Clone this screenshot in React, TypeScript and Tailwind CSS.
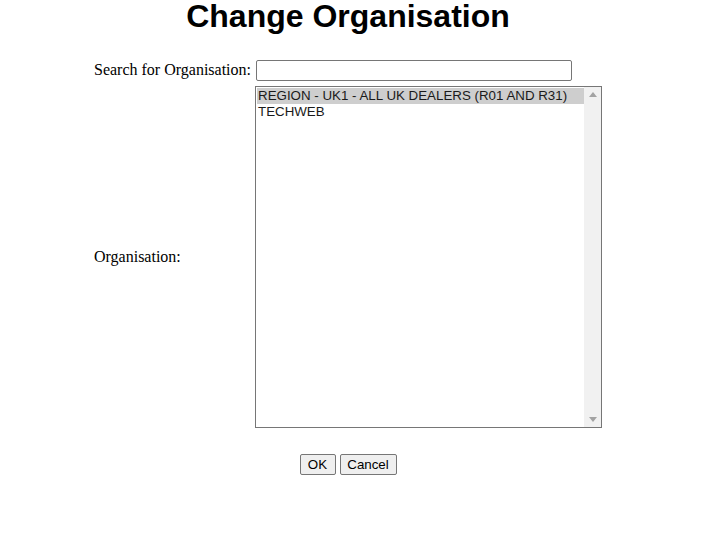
export default function App() {
  return (
    <div className="w-[707px] h-[533px] bg-white">
      <div className="w-[696px]">
        <h1 className="text-center font-bold text-[32px] leading-[32px] text-black font-['Liberation_Sans',Arial,sans-serif]">
          Change Organisation
        </h1>

        <div className="flex items-center mt-[26px] pl-[94px]">
          <label className="w-[161px] text-[16px] font-['Liberation_Serif','Times_New_Roman',serif] text-black">
            Search for Organisation:
          </label>
          <input
            type="text"
            className="ml-[1px] w-[316px] h-[21px] border border-[#767676] rounded-[2px] px-1 text-[13px] outline-none"
          />
        </div>

        <div className="flex items-center mt-[4px] pl-[94px]">
          <label className="w-[161px] text-[16px] font-['Liberation_Serif','Times_New_Roman',serif] text-black">
            Organisation:
          </label>
          <div className="flex w-[347px] h-[342px] border border-[#767676] bg-white">
            <div className="flex-1 pt-[1px] pl-[1px] font-['Liberation_Sans',Arial,sans-serif] text-[13.33px] text-[#1a1a1a]">
              <div className="h-[16px] leading-[16px] pl-[1px] bg-[#cecece]">
                REGION - UK1 - ALL UK DEALERS (R01 AND R31)
              </div>
              <div className="h-[16px] leading-[16px] pl-[1px]">TECHWEB</div>
            </div>
            <div className="w-[17px] bg-[#f1f1f1] flex flex-col justify-between items-center py-[5px]">
              <svg width="8" height="5" viewBox="0 0 8 5">
                <path d="M4 0 L8 5 L0 5 Z" fill="#a3a3a3" />
              </svg>
              <svg width="8" height="5" viewBox="0 0 8 5">
                <path d="M0 0 L8 0 L4 5 Z" fill="#a3a3a3" />
              </svg>
            </div>
          </div>
        </div>

        <div className="flex justify-center gap-[4px] mt-[26px] font-['Liberation_Sans',Arial,sans-serif] text-[13.33px] text-black">
          <button className="w-[36px] h-[21px] bg-[#efefef] border border-[#767676] rounded-[2px]">OK</button>
          <button className="w-[57px] h-[21px] bg-[#efefef] border border-[#767676] rounded-[2px]">Cancel</button>
        </div>
      </div>
    </div>
  );
}
